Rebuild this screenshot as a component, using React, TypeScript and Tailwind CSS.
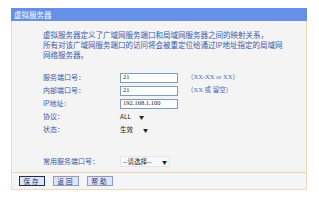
import React from 'react';

const font = { fontFamily: '"Noto Sans CJK SC", "Liberation Sans", sans-serif' };

function Row({ label, children, hint }: { label: string; children: React.ReactNode; hint?: string }) {
  return (
    <div className="flex items-center h-[13px]">
      <div className="w-[77px] text-[7px] text-[#3a5aa8] leading-none">{label}</div>
      {children}
      {hint && (
        <div className="ml-[9px] text-[6.5px] text-[#4a68b0] leading-none" style={{ fontFamily: '"Liberation Serif", "Noto Sans CJK SC", serif' }}>
          {hint}
        </div>
      )}
    </div>
  );
}

function TextBox({ value }: { value: string }) {
  return (
    <div className="w-[58px] h-[10px] border border-[#7f9db9] bg-white flex items-center pl-[2px] text-[6.5px] text-[#222] leading-none" style={{ fontFamily: '"Liberation Serif", serif' }}>
      {value}
    </div>
  );
}

function Select({ value, w }: { value: string; w: string }) {
  return (
    <div className={`${w} h-[10px] flex items-center justify-between text-[6.5px] text-[#222] leading-none`}>
      <span>{value}</span>
      <span className="text-[5px] pr-[2px]">▼</span>
    </div>
  );
}

export default function App() {
  return (
    <div className="w-[319px] h-[204px] bg-white pt-[8px] pl-[11px]" style={font}>
      <div className="w-[296px]">
        <div className="h-[13px] bg-[#6690e8] flex items-center pl-[3px] text-[7.5px] text-white leading-none">虚拟服务器</div>
        <div className="border-x border-b border-[#f2d8b6] bg-[#f4f4f4] h-[152px] pl-[31px] pt-[9px]">
          <div className="text-[7.5px] leading-[10px] text-[#3a5aa8] w-[240px]">
            <div>虚拟服务器定义了广域网服务端口和局域网服务器之间的映射关系，</div>
            <div>所有对该广域网服务端口的访问将会被重定位给通过IP地址指定的局域网</div>
            <div>网络服务器。</div>
          </div>
          <div className="mt-[11px] flex flex-col">
            <Row label="服务端口号：" hint="（XX-XX or XX）">
              <TextBox value="21" />
            </Row>
            <Row label="内部端口号：" hint="（XX 或 留空）">
              <TextBox value="21" />
            </Row>
            <Row label="IP地址：">
              <TextBox value="192.168.1.100" />
            </Row>
            <Row label="协议：">
              <Select value="ALL" w="w-[26px]" />
            </Row>
            <Row label="状态：">
              <Select value="生效" w="w-[30px]" />
            </Row>
          </div>
          <div className="mt-[19px] flex items-center h-[12px]">
            <div className="w-[77px] text-[7px] text-[#3a5aa8] leading-none">常用服务端口号：</div>
            <div className="w-[50px] h-[11px] border border-[#e4e4ea] bg-[#f8f8fa] flex items-center justify-between pl-[2px] text-[6.5px] text-[#222] leading-none">
              <span>--请选择--</span>
              <span className="text-[5px] pr-[2px]">▼</span>
            </div>
          </div>
        </div>
        <div className="h-[17px] border-x border-b border-[#f2d8b6] bg-[#f4f5f8] flex items-center gap-[8px] pl-[7px]">
          <button className="w-[26px] h-[10px] border border-[#1f2d5a] bg-[#dfe4f6] text-[6.5px] tracking-[2px] text-[#223366] leading-none flex items-center justify-center">保存</button>
          <button className="w-[26px] h-[10px] border border-[#8d9ac4] bg-[#dfe4f6] text-[6.5px] tracking-[2px] text-[#223366] leading-none flex items-center justify-center">返回</button>
          <button className="w-[26px] h-[10px] border border-[#8d9ac4] bg-[#dfe4f6] text-[6.5px] tracking-[2px] text-[#223366] leading-none flex items-center justify-center">帮助</button>
        </div>
      </div>
    </div>
  );
}
